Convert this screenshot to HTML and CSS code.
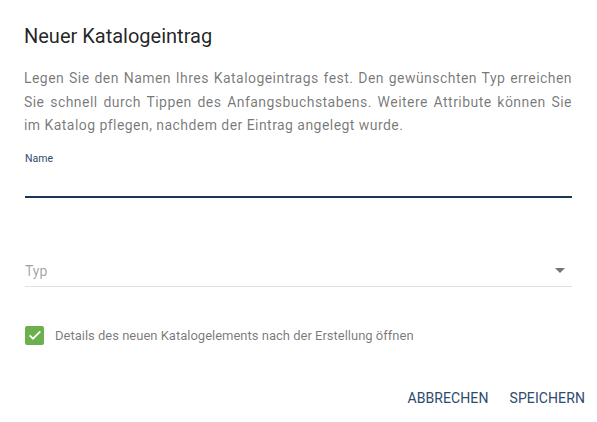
FILE: index.html
```html
<!DOCTYPE html>
<html lang="de">
<head>
    <meta charset="UTF-8">
    <title>Neuer Katalogeintrag</title>
    <link rel="stylesheet" href="styles.css">
</head>
<body>
    <div class="dialog">
        <h2 class="dialog-title">Neuer Katalogeintrag</h2>
        <p class="dialog-text">Legen Sie den Namen Ihres Katalogeintrags fest. Den gewünschten Typ erreichen Sie schnell durch Tippen des Anfangsbuchstabens. Weitere Attribute können Sie im Katalog pflegen, nachdem der Eintrag angelegt wurde.</p>

        <div class="field field-name">
            <label class="field-label" for="name">Name</label>
            <input class="field-input" type="text" id="name">
        </div>

        <div class="field field-select">
            <span class="select-placeholder">Typ</span>
            <span class="select-arrow"></span>
        </div>

        <label class="checkbox-row">
            <span class="checkbox-box">
                <svg width="16" height="16" viewBox="0 0 24 24"><path d="M4 12.5l5 5L20 6.5" fill="none" stroke="#fff" stroke-width="2.6"/></svg>
            </span>
            <span class="checkbox-text">Details des neuen Katalogelements nach der Erstellung öffnen</span>
        </label>

        <div class="dialog-actions">
            <button class="btn">Abbrechen</button>
            <button class="btn">Speichern</button>
        </div>
    </div>
</body>
</html>
```

FILE: styles.css
```css
body {
    margin: 0;
    font-family: Roboto, "Liberation Sans", sans-serif;
    background: #fff;
}
.dialog {
    width: 597px;
    height: 422px;
    box-sizing: border-box;
    padding: 24px 24px 0 24px;
}
.dialog-title {
    margin: 0;
    font-size: 20px;
    font-weight: 400;
    line-height: 24px;
    color: rgba(0, 0, 0, 0.87);
}
.dialog-text {
    margin: 19px 1px 0 0;
    font-size: 14px;
    line-height: 23.5px;
    letter-spacing: 0.45px;
    color: rgba(0, 0, 0, 0.54);
    text-align: justify;
}
.field {
    margin-right: 1px;
}
.field-name {
    margin-top: 14px;
    padding-left: 1px;
}
.field-label {
    display: block;
    font-size: 10.5px;
    line-height: 14px;
    color: #2d4a6f;
}
.field-input {
    display: block;
    width: 100%;
    box-sizing: border-box;
    height: 32px;
    border: none;
    border-bottom: 2px solid #1b3556;
    outline: none;
    padding: 0;
    font: inherit;
}
.field-select {
    margin-top: 58px;
    margin-left: 1px;
    height: 30px;
    display: flex;
    align-items: center;
    justify-content: space-between;
    border-bottom: 1px solid #e0e0e0;
}
.select-placeholder {
    font-size: 14px;
    color: rgba(0, 0, 0, 0.38);
}
.select-arrow {
    width: 0;
    height: 0;
    border-left: 5px solid transparent;
    border-right: 5px solid transparent;
    border-top: 5px solid #757575;
    margin-right: 7px;
}
.checkbox-row {
    display: flex;
    align-items: center;
    margin-top: 39px;
    margin-left: 1px;
}
.checkbox-box {
    width: 19px;
    height: 19px;
    border-radius: 2px;
    background: #6ab04c;
    display: flex;
    align-items: center;
    justify-content: center;
}
.checkbox-text {
    margin-left: 11px;
    font-size: 13px;
    color: rgba(0, 0, 0, 0.54);
}
.dialog-actions {
    display: flex;
    justify-content: flex-end;
    margin-top: 35px;
    margin-right: -20px;
    gap: 5px;
}
.btn {
    background: none;
    border: none;
    padding: 0 8px;
    height: 36px;
    font-family: inherit;
    font-size: 14px;
    text-transform: uppercase;
    letter-spacing: 0.1px;
    color: #2d4a6f;
    cursor: pointer;
}
```
